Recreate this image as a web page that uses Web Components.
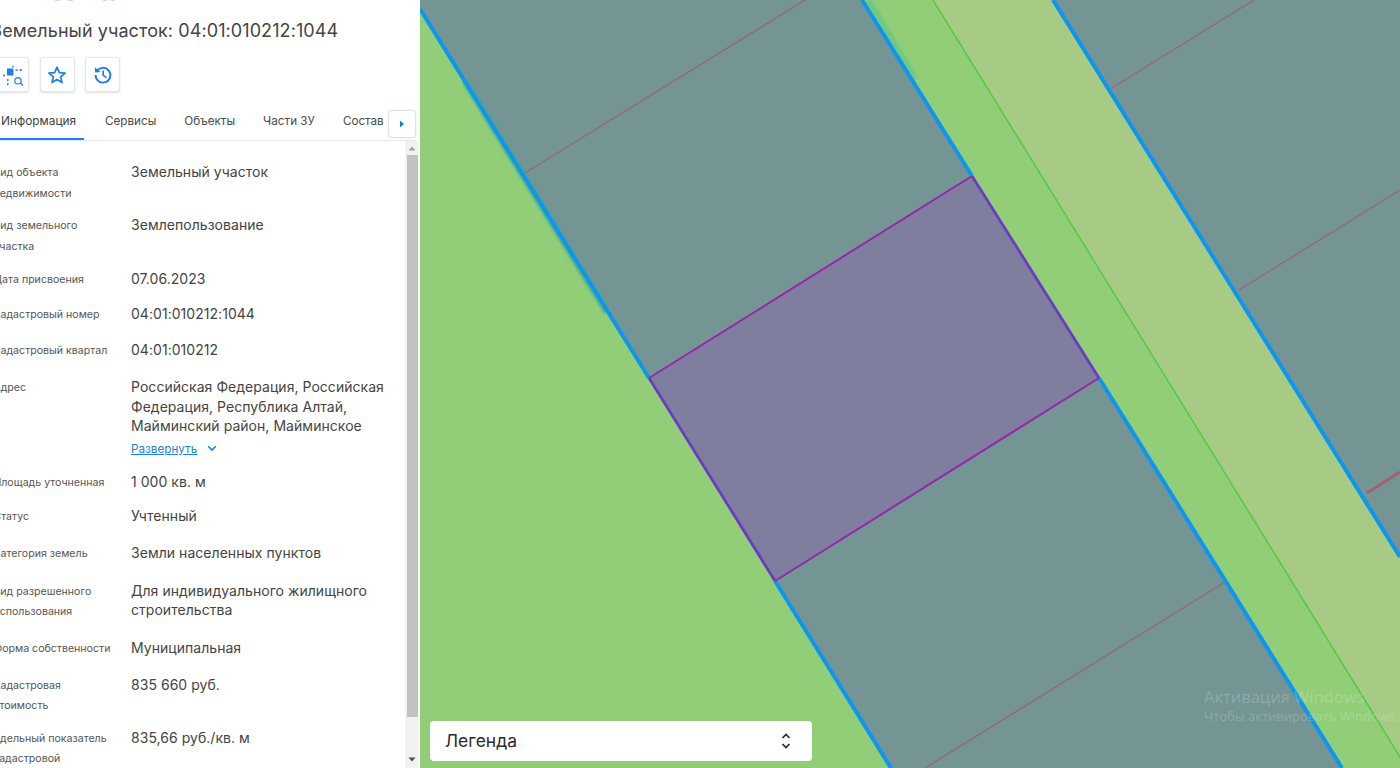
<!DOCTYPE html>
<html lang="ru"><head><meta charset="utf-8"><title>Земельный участок</title>
<style>
html,body{margin:0;padding:0;height:100%;overflow:hidden;background:#fff}
body{font-family:Inter,"Liberation Sans",sans-serif}
cad-app{width:1400px;height:768px}
</style></head><body>
<cad-app>
  <cad-panel slot="panel" heading="Земельный участок: 04:01:010212:1044">
    <info-row label="Вид объекта недвижимости" gap="12.2">Земельный участок</info-row>
    <info-row label="Вид земельного участка" gap="12.8">Землепользование</info-row>
    <info-row label="Дата присвоения" gap="14.6">07.06.2023</info-row>
    <info-row label="Кадастровый номер" gap="16">04:01:010212:1044</info-row>
    <info-row label="Кадастровый квартал" gap="16.6">04:01:010212</info-row>
    <info-row label="Адрес" gap="13.2" more>Российская Федерация, Российская Федерация, Республика Алтай, Майминский район, Майминское</info-row>
    <info-row label="Площадь уточненная" gap="13.6">1 000 кв. м</info-row>
    <info-row label="Статус" gap="16.2">Учтенный</info-row>
    <info-row label="Категория земель" gap="17.6">Земли населенных пунктов</info-row>
    <info-row label="Вид разрешенного использования" gap="16.2">Для индивидуального жилищного строительства</info-row>
    <info-row label="Форма собственности" gap="16.6">Муниципальная</info-row>
    <info-row label="Кадастровая стоимость" gap="12.2">835 660 руб.</info-row>
    <info-row label="Удельный показатель кадастровой" gap="0">835,66 руб./кв. м</info-row>
  </cad-panel>
  <map-view slot="map"></map-view>
</cad-app>
<script>
function def(name, html){
  customElements.define(name, class extends HTMLElement{
    connectedCallback(){
      if(this.shadowRoot) return;
      const r=this.attachShadow({mode:'open'});
      r.innerHTML=typeof html==='function'?html(this):html;
    }
  });
}
def('cad-app',`<style>:host{display:flex;overflow:hidden}
::slotted([slot=panel]){flex:0 0 420px}
::slotted([slot=map]){flex:1 1 auto}
</style><slot name="panel"></slot><slot name="map"></slot>`);

def('icon-btn',`<style>:host{display:flex;align-items:center;justify-content:center;flex:none;box-sizing:border-box;width:35px;height:35px;background:#fff;border:1px solid #e3e8ef;border-radius:3px;box-shadow:0 1px 2px rgba(90,110,140,.22)}
</style><slot></slot>`);

def('cad-tabs',`<style>:host{display:block}
.bar{display:flex;align-items:flex-start;height:30px;border-bottom:1px solid #e4e7eb;position:relative}
.tabs{display:flex;height:30px}
.lead{margin-left:-20px;width:104px;flex:none;height:30px;border-bottom:2px solid #1a7fe8;padding-left:21px;box-sizing:border-box;font-size:11.9px;line-height:22px;color:#3f3f3f;margin-right:21px;position:relative}
span{font-size:11.7px;line-height:22px;color:#4a4a4a;flex:none;margin-right:28px}
.next{position:absolute;right:0;top:0;width:28px;height:28px;box-sizing:border-box;background:#fff;border:1px solid #dbe4ee;border-radius:4px;display:flex;align-items:center;justify-content:center;box-shadow:0 0 2px rgba(90,110,140,.2)}
</style><div class="bar"><div class="tabs"><div class="lead">Информация</div><span>Сервисы</span><span>Объекты</span><span>Части ЗУ</span><span>Состав</span></div>
<div class="next"><svg width="8" height="10" viewBox="0 0 8 10"><path d="M2 1.5 6 5 2 8.5z" fill="#1a7fe8"/></svg></div></div>`);

def('scroll-bar',`<style>:host{display:flex;flex-direction:column;width:13px;background:#f1f1f1;box-sizing:border-box}
.a{height:14px;flex:none;display:flex;align-items:center;justify-content:center}
.thumb{flex:0 0 562px;margin-left:2px;background:#c1c1c1}
.track{flex:1}
</style><div class="a"><svg width="8" height="5" viewBox="0 0 8 5"><path d="M0.5 4.5 4 .5 7.5 4.5z" fill="#a3a3a3"/></svg></div><div class="thumb"></div><div class="track"></div><div class="a" style="height:17px"><svg width="8" height="5" viewBox="0 0 8 5"><path d="M0.5 .5 4 4.5 7.5 .5z" fill="#505050"/></svg></div>`);

def('info-row',t=>`<style>:host{display:grid;grid-template-columns:137px 1fr;color:#444;padding-bottom:${t.getAttribute('gap')}px}
.l{font-size:10.6px;line-height:20.4px;color:#555;margin:1px 0 -1px -.6px;padding-right:18px}
.v{font-size:14px;line-height:19.6px;color:#444;letter-spacing:.04px}
a{display:flex;align-items:center;gap:10px;font-size:11.7px;line-height:20px;color:#1a7fe8;margin-top:3px;letter-spacing:0}
u{text-decoration:underline}
</style><div class="l">${t.getAttribute('label')}</div><div class="v"><slot></slot>${t.hasAttribute('more')?`<a><u>Развернуть</u><svg width="10" height="7" viewBox="0 0 10 7"><path d="M1.2 1.2 5 5 8.8 1.2" fill="none" stroke="#1a7fe8" stroke-width="1.6"/></svg></a>`:''}</div>`);

def('cad-panel',t=>`<style>:host{display:flex;flex-direction:column;height:768px;overflow:hidden;background:#fff;color:#444;box-sizing:border-box}
.crumb{height:3px;flex:none;display:block}
h1{margin:0;flex:none;font-weight:400;font-size:18px;line-height:24px;letter-spacing:.085px;color:#444;margin-left:-9px;padding-top:16px;white-space:nowrap}
.tools{display:flex;gap:10.5px;margin:14px 0 0 -6px;flex:none}
.tools svg{display:block}
.tabs{flex:none;margin:18px 4px 0 0}
.body{flex:1;display:flex;min-height:0}
.list{flex:1;min-width:0;margin-left:-6px;padding-top:21.2px;padding-right:5px;overflow:hidden}
scroll-bar{margin-right:2px}
</style>
<svg class="crumb" width="420" height="3" viewBox="0 0 420 3"><path d="M55 .5h5M68 .5h5M103 .5h4M111 .5h4" stroke="#c5def7" stroke-width="1"/></svg>
<h1>${t.getAttribute('heading')}</h1>
<div class="tools">
 <icon-btn><svg width="26" height="26" viewBox="0 0 26 26"><rect x="8" y="6.5" width="6.4" height="7" fill="#1a7fe8"/><path d="M14 3.8v1.8M16.5 8h2.2M20.5 8h2.5M4 13.5h2M8.8 17v2.3M8.8 21v2.2" stroke="#1a7fe8" stroke-width="1.4" fill="none"/><circle cx="19" cy="18.8" r="3.2" fill="none" stroke="#1a7fe8" stroke-width="1.2"/><path d="M21.3 21.1 24 23.5" stroke="#1a7fe8" stroke-width="1.4"/></svg></icon-btn>
 <icon-btn><svg width="20" height="20" viewBox="0 0 20 20"><path d="M10 2.2 12.3 7.6 18.1 8.1 13.7 11.9 15 17.6 10 14.6 5 17.6 6.3 11.9 1.9 8.1 7.7 7.6z" fill="none" stroke="#1a7fe8" stroke-width="1.7" stroke-linejoin="round"/></svg></icon-btn>
 <icon-btn><svg width="20" height="20" viewBox="0 0 20 20"><path d="M3.6 6.5A7.4 7.4 0 1 1 2.6 10" fill="none" stroke="#1a7fe8" stroke-width="1.9"/><path d="M1.8 2.2 2.2 7.4 7.4 7z" fill="#1a7fe8"/><path d="M10.2 5.6v4.8l3.4 2.2" fill="none" stroke="#1a7fe8" stroke-width="1.7"/></svg></icon-btn>
</div>
<cad-tabs class="tabs"></cad-tabs>
<div class="body"><div class="list"><slot></slot></div><scroll-bar></scroll-bar></div>`);

def('legend-bar',`<style>:host{display:flex;align-items:center;justify-content:space-between;box-sizing:border-box;width:382px;height:40px;background:#fff;border-radius:4px;padding:0 20px 2px 15px;font-size:17.5px;color:#2b2b2b}
svg{display:block;margin-bottom:-2px}
</style><slot></slot><svg width="12" height="18" viewBox="0 0 12 18"><path d="M2.5 6 6 2.5 9.5 6M2.5 12 6 15.5 9.5 12" fill="none" stroke="#2b2b2b" stroke-width="1.7"/></svg>`);

def('activation-mark',`<style>:host{display:block;position:absolute;left:784px;top:686px;width:196px;overflow:hidden;white-space:nowrap;color:rgba(255,255,255,.2);font-family:"Open Sans","Liberation Sans",sans-serif;pointer-events:none}
div{font-size:16.5px;line-height:21px}
p{margin:0;font-size:13px;line-height:19px}
</style><div>Активация Windows</div><p>Чтобы активировать Windows, перейдите в раздел</p>`);

def('map-view',`<style>:host{display:block;position:relative;height:768px;overflow:hidden;background:#759595}
svg{position:absolute;left:0;top:0}
legend-bar{position:absolute;left:10px;bottom:7px}
</style>
<svg width="980" height="768" viewBox="420 0 980 768">
 <defs><filter id="b" x="-20%" y="-20%" width="140%" height="140%"><feGaussianBlur stdDeviation="1.2"/></filter></defs>
 <rect x="420" y="0" width="980" height="768" fill="#759595"/>
 <polygon points="420,9 891,768 420,768" fill="#92ce78"/>
 <polygon points="862,0 1053,0 1400,557 1400,768 1342,768" fill="#92ce78"/>
 <polygon points="933,0 1053,0 1400,557 1400,757" fill="#a7cb85"/>
 <polygon points="649,378 972,176 1099,378 775,581" fill="#7f7e9f"/>
 <g fill="none">
  <path d="M525 173 805 0M1112 88 1254 0M1239 290 1400 190M1225 582 925 768" stroke="#94687c" stroke-width="1.4"/>
  <path d="M1367 493 1400 472" stroke="#a5606f" stroke-width="3"/>
  <path d="M465 81 607 312" stroke="#3fa88f" stroke-width="7" filter="url(#b)" opacity=".8"/>
  <path d="M868 0 915 79" stroke="#58c48a" stroke-width="7" filter="url(#b)" opacity=".6"/>
  <path d="M933 0 1400 757" stroke="#4fcc45" stroke-width="1.5"/>
  <path d="M420 9 649 378M775 581 891 768M862 0 972 176M1099 378 1342 768M1053 0 1400 557" stroke="#0d96f0" stroke-width="4"/>
  <path d="M649 378 972 176M775 581 1099 378" stroke="#9427ab" stroke-width="2"/>
  <path d="M649 378 775 581M972 176 1099 378" stroke="#6a3cc4" stroke-width="2.8"/>
 </g>
</svg>
<legend-bar>Легенда</legend-bar>
<activation-mark></activation-mark>`);
</script>
</body></html>
